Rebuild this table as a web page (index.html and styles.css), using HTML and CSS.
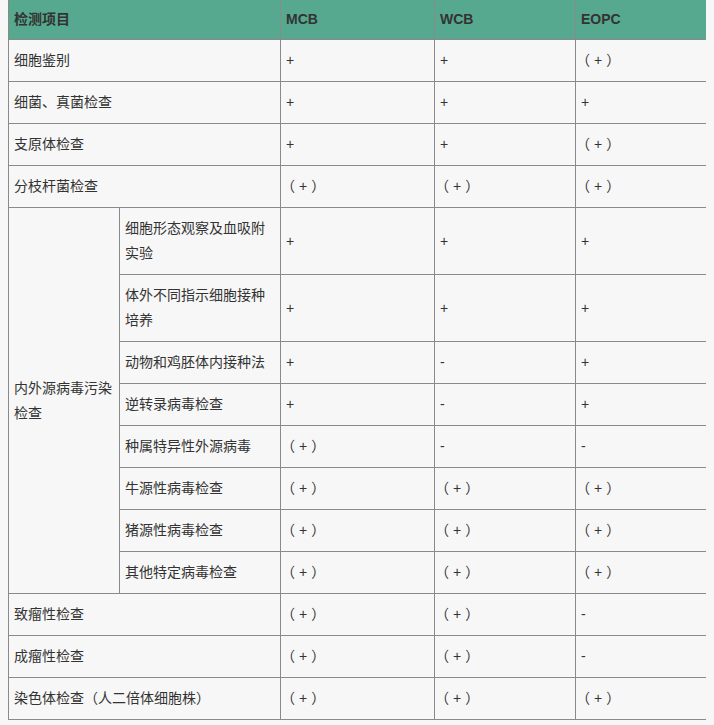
FILE: index.html
```html
<!DOCTYPE html>
<html lang="zh">
<head>
<meta charset="utf-8">
<link rel="stylesheet" href="styles.css">
</head>
<body>
<table class="grid">
  <colgroup>
    <col class="c1"><col class="c2"><col class="c3"><col class="c4"><col class="c5">
  </colgroup>
  <thead>
    <tr><th colspan="2">检测项目</th><th>MCB</th><th>WCB</th><th>EOPC</th></tr>
  </thead>
  <tbody>
    <tr><td colspan="2">细胞鉴别</td><td>+</td><td>+</td><td class="pm">（+）</td></tr>
    <tr><td colspan="2">细菌、真菌检查</td><td>+</td><td>+</td><td>+</td></tr>
    <tr><td colspan="2">支原体检查</td><td>+</td><td>+</td><td class="pm">（+）</td></tr>
    <tr><td colspan="2">分枝杆菌检查</td><td class="pm">（+）</td><td class="pm">（+）</td><td class="pm">（+）</td></tr>
    <tr><td rowspan="8">内外源病毒污染检查</td><td>细胞形态观察及血吸附实验</td><td>+</td><td>+</td><td>+</td></tr>
    <tr><td>体外不同指示细胞接种培养</td><td>+</td><td>+</td><td>+</td></tr>
    <tr><td>动物和鸡胚体内接种法</td><td>+</td><td>-</td><td>+</td></tr>
    <tr><td>逆转录病毒检查</td><td>+</td><td>-</td><td>+</td></tr>
    <tr><td>种属特异性外源病毒</td><td class="pm">（+）</td><td>-</td><td>-</td></tr>
    <tr><td>牛源性病毒检查</td><td class="pm">（+）</td><td class="pm">（+）</td><td class="pm">（+）</td></tr>
    <tr><td>猪源性病毒检查</td><td class="pm">（+）</td><td class="pm">（+）</td><td class="pm">（+）</td></tr>
    <tr><td>其他特定病毒检查</td><td class="pm">（+）</td><td class="pm">（+）</td><td class="pm">（+）</td></tr>
    <tr><td colspan="2">致瘤性检查</td><td class="pm">（+）</td><td class="pm">（+）</td><td>-</td></tr>
    <tr><td colspan="2">成瘤性检查</td><td class="pm">（+）</td><td class="pm">（+）</td><td>-</td></tr>
    <tr><td colspan="2">染色体检查（人二倍体细胞株）</td><td class="pm">（+）</td><td class="pm">（+）</td><td class="pm">（+）</td></tr>
  </tbody>
</table>
</body>
</html>
```
FILE: styles.css
```css
html, body {
  background: #f7f7f7;
}
body {
  margin: 0 8px;
  font-family: "Liberation Sans", "Noto Sans CJK SC", sans-serif;
  font-size: 14px;
  color: #333;
}
.grid {
  width: 699px;
  table-layout: fixed;
  border-collapse: collapse;
  background: #f7f7f7;
}
.c1 { width: 111px; }
.c2 { width: 161px; }
.c3 { width: 154px; }
.c4 { width: 141px; }
.c5 { width: 132px; }
.grid th,
.grid td {
  border: 1px solid #8a8a8a;
  padding: 8px 5px;
  line-height: 25px;
  text-align: left;
  vertical-align: middle;
}
.grid th {
  background: #56a98e;
  font-weight: bold;
  padding: 7px 5px;
  border-top: 0;
}
.grid td.pm {
  text-indent: -5px;
  letter-spacing: 4px;
}
```
